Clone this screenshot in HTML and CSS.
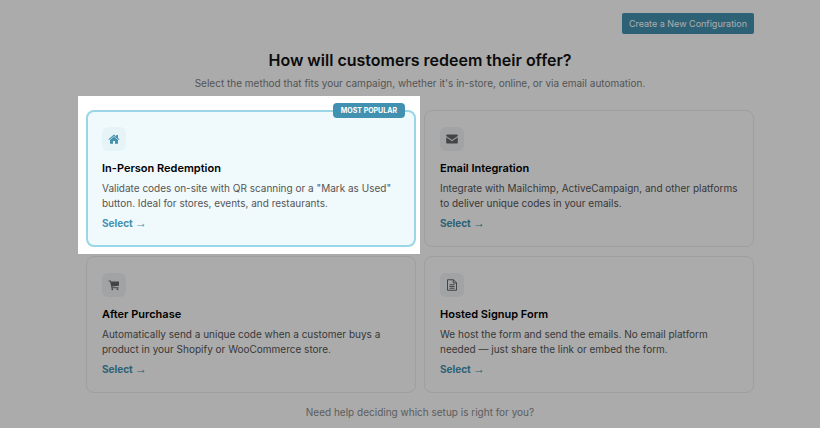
FILE: index.html
```html
<!DOCTYPE html>
<html lang="en">
<head>
    <meta charset="UTF-8">
    <meta name="viewport" content="width=device-width, initial-scale=1.0">
    <title>Choose a redemption method</title>
    <link rel="stylesheet" href="styles.css">
</head>
<body>

<div class="container">
    <header class="toolbar">
        <button type="button" class="create-button">Create a New Configuration</button>
    </header>

    <main>
        <div class="intro">
            <h1>How will customers redeem their offer?</h1>
            <p>Select the method that fits your campaign, whether it's in-store, online, or via email automation.</p>
        </div>

        <div class="methods">
            <!-- Highlighted card, everything else is dimmed -->
            <div class="spotlight">
                <article class="card featured">
                    <span class="badge">Most Popular</span>
                    <div class="icon">
                        <svg viewBox="0 0 24 24" width="12" height="12" aria-hidden="true">
                            <path d="M12 3 1 12.500l1.300 1.600L12 5.900l9.700 8.200 1.300-1.600-3-2.600V4h-3.500v2.900z"/>
                            <path d="M12 7.200 4 14V21.500h6v-5.500h4v5.500h6V14z"/>
                        </svg>
                    </div>
                    <h2>In-Person Redemption</h2>
                    <p>Validate codes on-site with QR scanning or a "Mark as Used" button. Ideal for stores, events, and restaurants.</p>
                    <a href="#in-person">Select <span>→</span></a>
                </article>
            </div>

            <article class="card">
                <div class="icon">
                    <svg viewBox="0 0 24 24" width="12" height="12" aria-hidden="true">
                        <path d="M2 3h20a1.500 1.500 0 0 1 1.500 1.500v1.300L12 14 .5 5.800V4.500A1.500 1.500 0 0 1 2 3z"/>
                        <path d="M.5 8.500 12 16.700l11.500-8.200v11A1.500 1.500 0 0 1 22 21H2a1.500 1.500 0 0 1-1.500-1.500z"/>
                    </svg>
                </div>
                <h2>Email Integration</h2>
                <p>Integrate with Mailchimp, ActiveCampaign, and other platforms to deliver unique codes in your emails.</p>
                <a href="#email">Select <span>→</span></a>
            </article>

            <article class="card">
                <div class="icon">
                    <svg viewBox="0 0 24 24" width="12" height="12" aria-hidden="true">
                        <path d="M1 3h4.500l.7 2H22v8.500L8.600 15l.3 1.500H21v2H7.200L4 5H1z"/>
                        <circle cx="8.500" cy="20.500" r="1.800"/>
                        <circle cx="19" cy="20.500" r="1.800"/>
                    </svg>
                </div>
                <h2>After Purchase</h2>
                <p>Automatically send a unique code when a customer buys a product in your Shopify or WooCommerce store.</p>
                <a href="#after-purchase">Select <span>→</span></a>
            </article>

            <article class="card">
                <div class="icon">
                    <svg class="outline" viewBox="0 0 24 24" width="12" height="12" aria-hidden="true">
                        <path d="M3 1.500h12l6 6v15H3z"/>
                        <path d="M14.500 1.500V8H21M7 11.500h10M7 15h10M7 18.500h10"/>
                    </svg>
                </div>
                <h2>Hosted Signup Form</h2>
                <p>We host the form and send the emails. No email platform needed — just share the link or embed the form.</p>
                <a href="#hosted-form">Select <span>→</span></a>
            </article>
        </div>
    </main>

    <footer>
        <p>Need help deciding which setup is right for you?</p>
    </footer>
</div>

</body>
</html>
```

FILE: styles.css
```css
* {
    box-sizing: border-box;
}
body {
    font-family: Inter, sans-serif;
    font-size: 10px;
    line-height: 15px;
    margin: 0;
    padding-left: 20px;
    min-height: 100vh;
    background: #fff;
    color: #555;
}
h1, h2, p {
    margin: 0;
}
.container {
    max-width: 700px;
    margin: 0 auto;
    padding: 13px 16px 0;
}
.toolbar {
    display: flex;
    justify-content: flex-end;
}
.create-button {
    background: #4391b0;
    color: white;
    border: none;
    border-radius: 2px;
    padding: 3px 7px;
    font-family: inherit;
    font-size: 9px;
    line-height: 15px;
    cursor: pointer;
}
.intro {
    text-align: center;
    padding: 16px 0 19px;
}
.intro h1 {
    font-size: 16px;
    line-height: 20px;
    font-weight: 600;
    color: #111;
}
.intro p {
    margin-top: 6px;
    color: #808080;
}
.methods {
    display: grid;
    grid-template-columns: 1fr 1fr;
    gap: 9px 8px;
}
.card {
    position: relative;
    border: 1px solid #ededed;
    border-radius: 8px;
    padding: 16px 15px;
}
.spotlight {
    position: relative;
    z-index: 1;
}
/* White frame with the dimming shade around it */
.spotlight::before {
    content: "";
    position: absolute;
    inset: -14px -4px -7px -8px;
    z-index: -1;
    background: white;
    box-shadow: 0 0 0 100vmax rgba(0, 0, 0, 0.33);
}
.featured {
    border: 2px solid #9ad6e6;
    padding: 15px 14px;
    background: #f0f9fc;
}
.badge {
    position: absolute;
    top: -9px;
    right: 9px;
    padding: 0 8px;
    border-radius: 4px;
    background: #4391b0;
    color: white;
    font-size: 7px;
    font-weight: 700;
    text-transform: uppercase;
}
.icon {
    display: flex;
    align-items: center;
    justify-content: center;
    width: 24px;
    height: 24px;
    border-radius: 6px;
    background: #f2f4f7;
    color: #666;
}
.icon svg {
    fill: currentColor;
}
.icon .outline {
    fill: none;
    stroke: currentColor;
    stroke-width: 2;
}
.featured .icon {
    background: #e6f4f7;
    color: #4391b0;
}
.card h2 {
    margin: 10px 0 5px;
    font-size: 11px;
    line-height: 15px;
    font-weight: 600;
    color: #000;
}
.card a {
    display: inline-block;
    margin-top: 5px;
    color: #4391b0;
    font-weight: 700;
    text-decoration: none;
}
.card a span {
    font-family: "Liberation Sans", sans-serif;
    font-size: 12px;
    font-weight: 400;
}
.card {
    padding-bottom: 15px;
}
.featured {
    padding-bottom: 14px;
}
footer {
    margin-top: 12px;
    text-align: center;
    color: #8c8c8c;
}
```
